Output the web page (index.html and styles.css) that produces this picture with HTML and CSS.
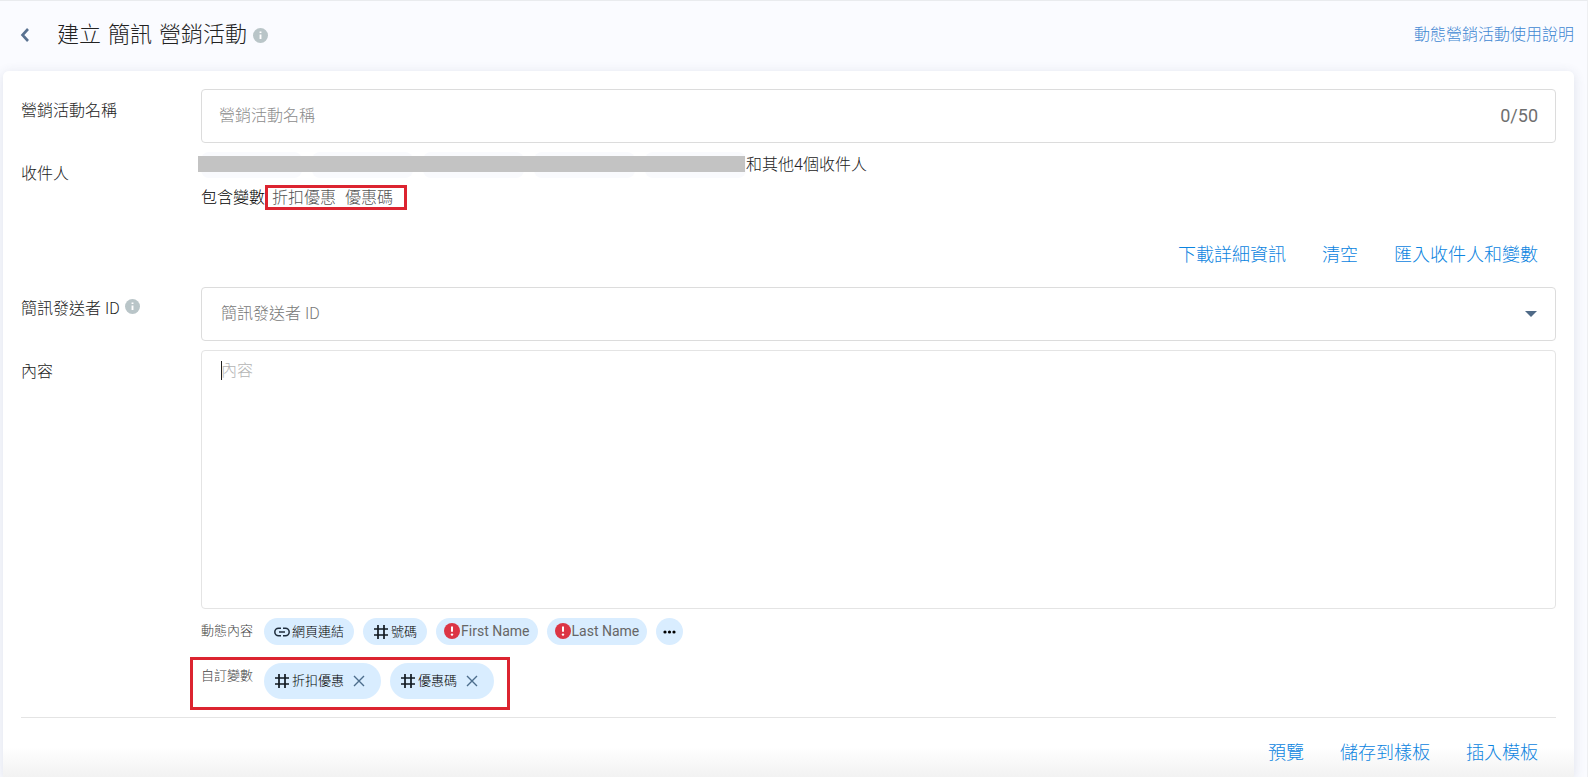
FILE: index.html
```html
<!DOCTYPE html>
<html lang="zh-Hant">
<head>
<meta charset="utf-8">
<meta name="viewport" content="width=device-width, initial-scale=1">
<title>建立 簡訊 營銷活動</title>
<link rel="stylesheet" href="styles.css">
</head>
<body>
<svg class="sprite" aria-hidden="true">
  <symbol id="info" viewBox="0 0 16 16"><circle cx="8" cy="8" r="8" fill="#b9c5c8"/><path d="M7 3.6h2v1.8H7zM7 6.8h2v5H7z" fill="#fff"/></symbol>
  <symbol id="hash" viewBox="0 0 16 16"><path d="M5 1v14M11 1v14M1 5h14M1 11h14" fill="none" stroke="#111820" stroke-width="1.7"/></symbol>
  <symbol id="link" viewBox="0 0 16 16"><path d="M7 4.2H4.6a3.8 3.8 0 0 0 0 7.6H7M9 4.2h2.4a3.8 3.8 0 0 1 0 7.6H9M5 8h6" fill="none" stroke="#1f2d3d" stroke-width="1.5"/></symbol>
  <symbol id="alert" viewBox="0 0 16 16"><circle cx="8" cy="8" r="8" fill="#dc3545"/><path d="M8 3.4v5.4" stroke="#fff" stroke-width="2"/><circle cx="8" cy="11.6" r="1.2" fill="#fff"/></symbol>
  <symbol id="close" viewBox="0 0 16 16"><path d="M3 3l10 10M13 3L3 13" fill="none" stroke="#4c6d8c" stroke-width="1.4"/></symbol>
</svg>
<header class="topbar">
  <button class="icon-button back" type="button" aria-label="返回"><svg width="10" height="14" viewBox="0 0 10 14"><path d="M8 1L2.5 7 8 13" fill="none" stroke="#587190" stroke-width="2.6"/></svg></button>
  <h1 class="title">建立 簡訊 營銷活動</h1>
  <svg class="info" role="img" aria-label="說明"><use href="#info"/></svg>
  <a class="help" href="#help">動態營銷活動使用說明</a>
</header>
<main class="card">
  <form class="form">
    <label class="label" for="name">營銷活動名稱</label>
    <div class="box name-box">
      <input class="input" id="name" type="text" placeholder="營銷活動名稱" maxlength="50">
      <span class="counter">0/50</span>
    </div>

    <span class="label">收件人</span>
    <div class="recipients">
      <div class="recipient-line">
        <div class="people"><i></i><i></i><i></i><i></i><i></i></div>
        <span>和其他4個收件人</span>
      </div>
      <div class="variables">
        <span class="variables-label">包含變數</span>
        <span class="marked variable-list"><span>折扣優惠</span><span>優惠碼</span></span>
      </div>
      <div class="actions">
        <button class="action" type="button">下載詳細資訊</button>
        <button class="action" type="button">清空</button>
        <button class="action" type="button">匯入收件人和變數</button>
      </div>
    </div>

    <div class="label"><label for="sender">簡訊發送者 ID</label><svg class="info" role="img" aria-label="說明"><use href="#info"/></svg></div>
    <div class="select-wrap">
      <select class="box select" id="sender"><option>簡訊發送者 ID</option></select>
      <svg class="arrow" width="12" height="6" viewBox="0 0 12 6"><path d="M0 0h12L6 6z" fill="#4f6a87"/></svg>
    </div>

    <label class="label" for="content">內容</label>
    <div class="editor">
      <textarea class="box textarea" id="content" placeholder="內容"></textarea>
      <span class="caret"></span>
    </div>
  </form>

  <section class="dynamic">
    <span class="small-label">動態內容</span>
    <button class="chip" type="button"><svg class="glyph"><use href="#link"/></svg>網頁連結</button>
    <button class="chip" type="button"><svg class="glyph"><use href="#hash"/></svg>號碼</button>
    <button class="chip latin" type="button"><svg class="glyph"><use href="#alert"/></svg>First Name</button>
    <button class="chip latin" type="button"><svg class="glyph"><use href="#alert"/></svg>Last Name</button>
    <button class="chip more" type="button" aria-label="更多"><svg width="13" height="4" viewBox="0 0 13 4"><circle cx="2" cy="2" r="1.6"/><circle cx="6.5" cy="2" r="1.6"/><circle cx="11" cy="2" r="1.6"/></svg></button>
  </section>
  <section class="marked custom">
    <span class="small-label">自訂變數</span>
    <span class="chip tall"><svg class="glyph"><use href="#hash"/></svg>折扣優惠<button class="icon-button remove" type="button" aria-label="移除折扣優惠"><svg class="glyph"><use href="#close"/></svg></button></span>
    <span class="chip tall"><svg class="glyph"><use href="#hash"/></svg>優惠碼<button class="icon-button remove" type="button" aria-label="移除優惠碼"><svg class="glyph"><use href="#close"/></svg></button></span>
  </section>
  <footer class="footer actions">
    <button class="action" type="button">預覽</button>
    <button class="action" type="button">儲存到樣板</button>
    <button class="action" type="button">插入模板</button>
  </footer>
</main>
</body>
</html>
```
FILE: styles.css
```css
* { box-sizing: border-box; }
html { height: 100%; }
body {
  margin: 0;
  min-height: 100%;
  display: flex;
  flex-direction: column;
  background: #fafbff;
  border-top: 1px solid #e9ebee;
  border-right: 1px solid #eeeff2;
  font: 300 16px/24px Roboto, "Noto Sans CJK TC", sans-serif;
  color: #222;
}
button, input, select, textarea { font: inherit; }
button { border: 0; background: none; padding: 0; cursor: pointer; }
.sprite { position: absolute; width: 0; height: 0; }
.info { width: 15px; height: 15px; flex: none; }

.topbar { display: flex; align-items: center; height: 70px; padding: 0 13px 2px 20px; }
.icon-button { display: flex; }
.back { width: 37px; }
.title { margin: 0 6px 0 0; font: 300 22px/32px "DejaVu Sans ExtraLight", "DejaVu Sans", "Noto Sans CJK TC", sans-serif; color: #222; }
.help { margin-left: auto; color: #3f87d2; text-decoration: none; }

.card {
  flex: 1;
  margin: 0 13px 0 3px;
  padding: 18px 18px 0 18px;
  border-radius: 6px 6px 0 0;
  background: linear-gradient(to top, #f2f2f2, #fff 30px);
  box-shadow: 0 2px 12px rgba(60, 70, 110, .14);
}
.form { display: grid; grid-template-columns: 180px 1fr; row-gap: 9px; }
.label { display: flex; align-items: flex-start; gap: 5px; padding-top: 10px; }
.label .info { margin-top: 2px; }
.box {
  width: 100%;
  border: 1px solid #dcdcdc;
  border-radius: 4px;
  background: #fff;
}
.name-box { display: flex; align-items: center; height: 54px; padding: 0 17px; }
.input { flex: 1; border: 0; outline: 0; padding: 0; background: none; }
::placeholder { color: #8c8c8c; opacity: 1; }
.counter { font-size: 18px; font-weight: 400; color: #6f6f6f; }

.recipient-line { display: flex; align-items: center; height: 26px; }
.people { position: relative; display: flex; gap: 10px; width: 545px; height: 26px; }
.people i { flex: 1; border-radius: 8px; background: #f9fafd; }
.people::after { content: ""; position: absolute; inset: 4px 1px 6px -3px; background: #c3c3c3; }
.variables { display: flex; align-items: center; margin-top: 7px; color: #000; }
.marked { border: 3px solid #dc2430; }
.variable-list { display: flex; align-items: center; gap: 9px; width: 142px; height: 25px; padding-left: 4px; color: #555; }
.actions { display: flex; justify-content: flex-end; gap: 36px; padding-right: 18px; }
.action { font-size: 18px; line-height: 26px; color: #0c84e0; }
.recipients .actions { margin: 32px 0 10px; }

.select-wrap { position: relative; }
.select { height: 54px; padding: 0 19px; appearance: none; color: #777; }
.arrow { position: absolute; right: 19px; top: 24px; pointer-events: none; }
.editor { position: relative; display: flex; }
.textarea { height: 259px; padding: 8px 19px; border-color: #e4e4e4; outline: 0; resize: none; }
.textarea::placeholder { color: #b4b4b4; }
.caret { position: absolute; left: 20px; top: 11px; width: 1px; height: 19px; background: #222; }

.dynamic, .custom { display: flex; gap: 9px; font-size: 13px; }
.dynamic { margin: 9px 0 0 180px; }
.small-label { width: 54px; line-height: 25px; color: #444; }
.chip { display: flex; align-items: center; height: 27px; padding: 0 10px; gap: 2px; border-radius: 18px; background: #d9edff; color: #000; }
.latin { padding: 0 8px 2px; gap: 1px; font-size: 14px; font-weight: 400; color: #666; }
.glyph { width: 16px; height: 16px; flex: none; }
.more { width: 27px; padding: 0; justify-content: center; }
.tall { height: 36px; padding-right: 14px; }
.tall .remove { margin-left: 5px; }
.custom { width: 320px; height: 53px; margin: 12px 0 7px 169px; padding: 3px 0 0 8px; }
.footer { border-top: 1px solid #e4e4e4; padding-top: 22px; }
```
